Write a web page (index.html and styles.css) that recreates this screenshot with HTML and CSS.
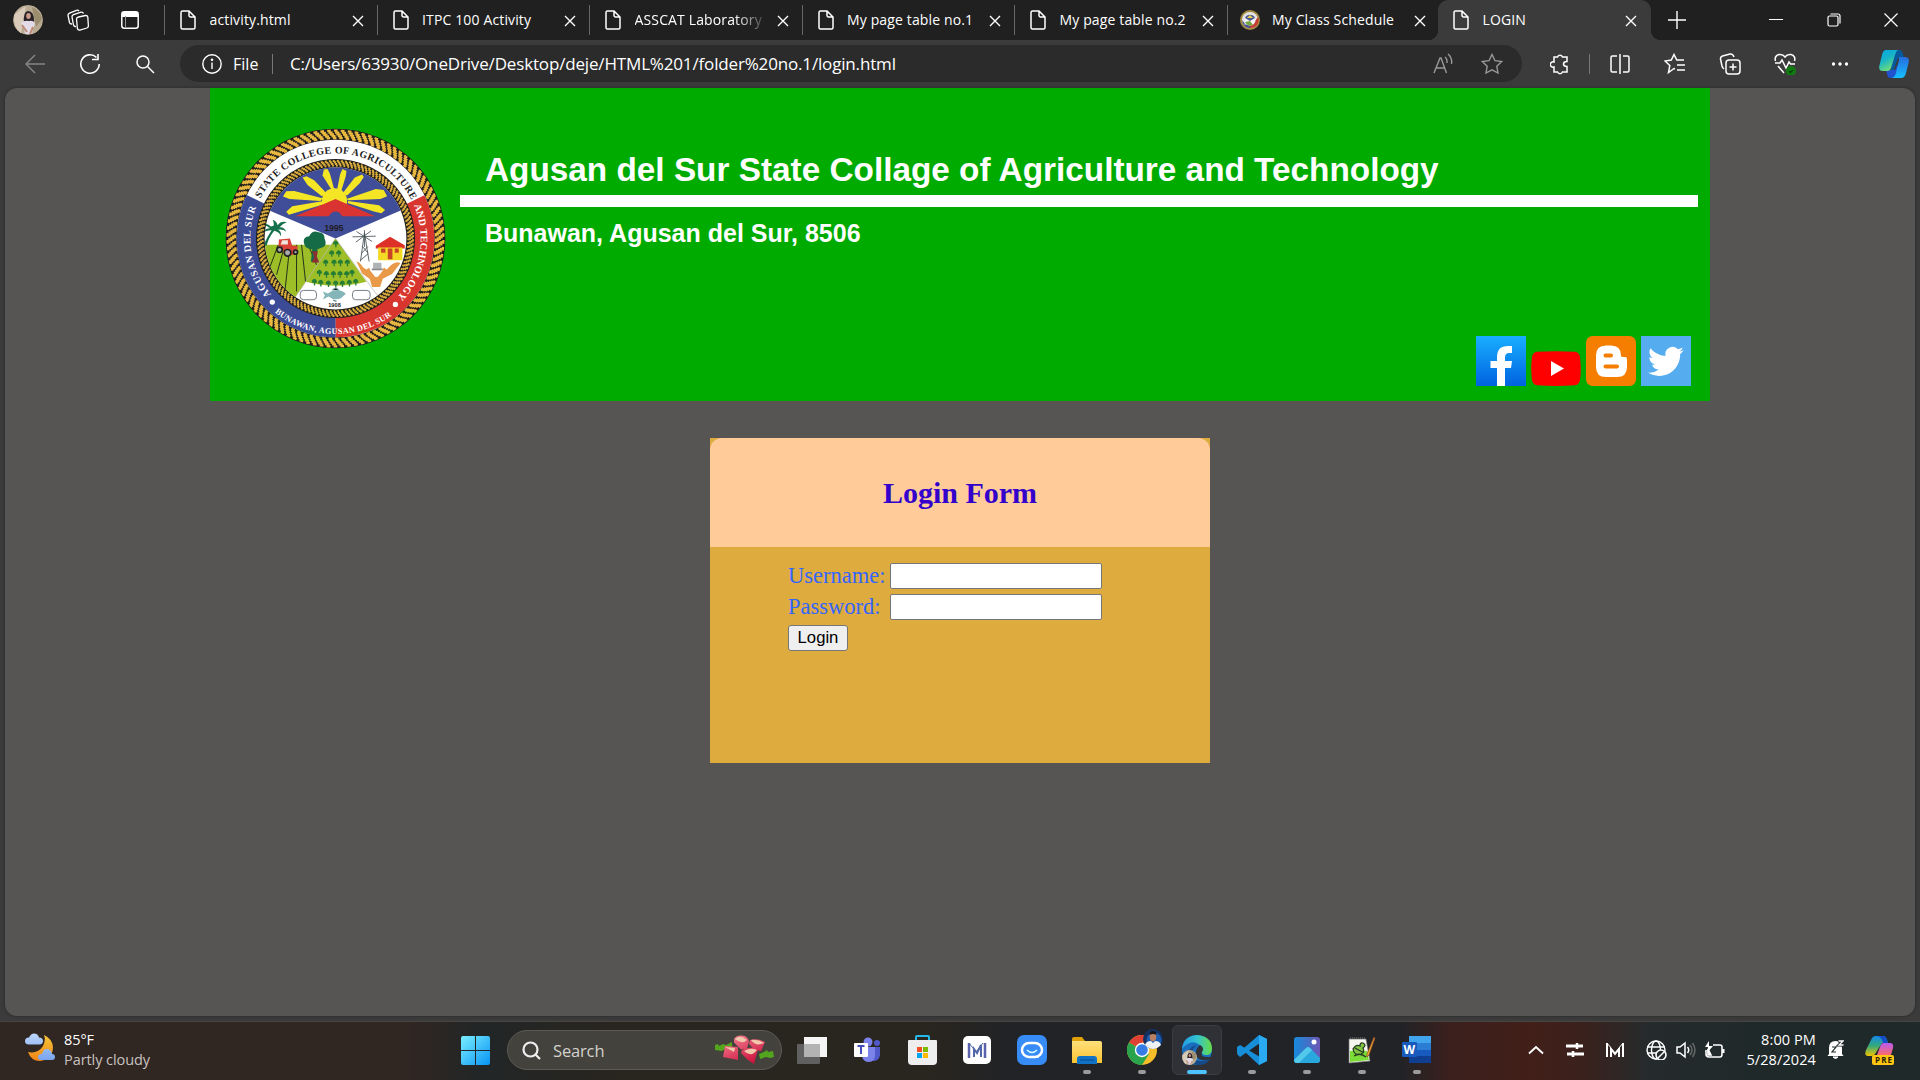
FILE: index.html
```html
<!DOCTYPE html>
<html lang="en">
<head>
<meta charset="utf-8">
<title>LOGIN</title>
<link rel="stylesheet" href="styles.css">
</head>
<body>
<svg class="defs" width="0" height="0">
  <defs>
    <symbol id="doc" viewBox="0 0 16 20"><path d="M2.5 1H9l6 6v10.500a1.500 1.500 0 0 1-1.500 1.500h-11A1.500 1.500 0 0 1 1 17.500v-15A1.500 1.500 0 0 1 2.500 1zM9 1v4.500A1.500 1.500 0 0 0 10.500 7H15" fill="none" stroke="#fff" stroke-width="1.500"/></symbol>
    <symbol id="x" viewBox="0 0 12 12"><path d="M1 1l10 10M11 1L1 11" stroke="#fff" stroke-width="1.400"/></symbol>
    <symbol id="girl" viewBox="0 0 30 30"><circle cx="15" cy="15" r="15" fill="#b9ab93"/><path d="M1 10Q8 4 13 1L8 29Q0 22 1 10z" fill="#d8cbb9"/><path d="M19 2q9 4 10 12l-6 8z" fill="#9c8d6f"/><path d="M11 17q-1-10 4-11 6 0 6 10l-1 3h-8z" fill="#292126"/><ellipse cx="15.500" cy="11" rx="2.300" ry="3" fill="#c99b8b"/><path d="M8 18q3-3 8-2 5-1 6 3l-2 5-1 5h-7l-1-5z" fill="#e3dbe8"/><path d="M9 20l5 7M20 22l-3 7" stroke="#bd8b78" stroke-width="2"/></symbol>
    <linearGradient id="fb" x2="0" y2="1"><stop stop-color="#19afff"/><stop offset="1" stop-color="#0062e0"/></linearGradient>
    <linearGradient id="win" gradientUnits="userSpaceOnUse" x2="29" y2="29"><stop stop-color="#7aefff"/><stop offset="1" stop-color="#0793f5"/></linearGradient>
    <linearGradient id="cpA" x2=".5" y2="1"><stop stop-color="#05a6e9"/><stop offset=".5" stop-color="#18b5c6"/><stop offset="1" stop-color="#76df75"/></linearGradient>
    <linearGradient id="cpB" x2="0" y2="1"><stop stop-color="#276cdf"/><stop offset="1" stop-color="#15bfff"/></linearGradient>
    <linearGradient id="cpC" x2="0" y2="1"><stop stop-color="#1389e9"/><stop offset=".5" stop-color="#36aa78"/><stop offset="1" stop-color="#f2c500"/></linearGradient>
    <linearGradient id="cpD" x2="0" y2="1"><stop stop-color="#b75af0"/><stop offset="1" stop-color="#fa6b6c"/></linearGradient>
    <linearGradient id="moon" x2="0" y2="1"><stop stop-color="#f5c63a"/><stop offset="1" stop-color="#f08314"/></linearGradient>
    <linearGradient id="cloud" x2="0" y2="1"><stop stop-color="#bcd5fb"/><stop offset="1" stop-color="#79a5ee"/></linearGradient>
    <linearGradient id="edgeA"><stop stop-color="#209be6"/><stop offset=".5" stop-color="#32c3d1"/><stop offset="1" stop-color="#68dc45"/></linearGradient>
    <linearGradient id="folder" x2="0" y2="1"><stop stop-color="#ffe07a"/><stop offset="1" stop-color="#fcc332"/></linearGradient>
    <linearGradient id="photo" x2="1"><stop stop-color="#168bdb"/><stop offset="1" stop-color="#6b58b5"/></linearGradient>
    <linearGradient id="red" x2=".6" y2="1"><stop stop-color="#f38b98"/><stop offset="1" stop-color="#cf1340"/></linearGradient>
    <symbol id="seal" viewBox="45 53 664 664">
      <circle cx="377" cy="385" r="330" fill="#211f1c"/>
      <g fill="none" stroke="#e9b940" stroke-width="7">
        <circle cx="377" cy="385" r="302" pathLength="980" stroke-dasharray="5.600 4.400"/>
        <circle cx="377" cy="385" r="307.500" pathLength="980" stroke-dasharray="6.300 3.700" transform="rotate(-.7 377 385)"/>
        <circle cx="377" cy="385" r="313" pathLength="980" stroke-dasharray="6.600 3.400" transform="rotate(-1.500 377 385)"/>
        <circle cx="377" cy="385" r="318.500" pathLength="980" stroke-dasharray="6.300 3.700" transform="rotate(-2.200 377 385)"/>
        <circle cx="377" cy="385" r="324" pathLength="980" stroke-dasharray="5.400 4.600" transform="rotate(-2.800 377 385)"/>
      </g>
      <g fill="none" stroke-width="60">
        <circle cx="377" cy="385" r="267" stroke="#fff"/>
        <circle cx="377" cy="385" r="267" stroke="#d9352f" pathLength="360" stroke-dasharray="116 244" transform="rotate(-26 377 385)"/>
        <circle cx="377" cy="385" r="267" stroke="#3c4b96" pathLength="360" stroke-dasharray="116 244" transform="rotate(90 377 385)"/>
      </g>
      <circle cx="377" cy="385" r="239" fill="#211f1c"/>
      <g fill="none" stroke="#dcae3e" stroke-width="6">
        <circle cx="377" cy="385" r="219" pathLength="1200" stroke-dasharray="5 5"/>
        <circle cx="377" cy="385" r="224" pathLength="1200" stroke-dasharray="6 4" transform="rotate(-.8 377 385)"/>
        <circle cx="377" cy="385" r="229" pathLength="1200" stroke-dasharray="6 4" transform="rotate(-1.600 377 385)"/>
        <circle cx="377" cy="385" r="233" pathLength="1200" stroke-dasharray="5 5" transform="rotate(-2.300 377 385)"/>
      </g>
      <clipPath id="disc"><circle cx="377" cy="385" r="213"/></clipPath>
      <g clip-path="url(#disc)">
        <rect x="160" y="165" width="440" height="440" fill="#fff"/>
        <path d="M150 289L377 385l227-98V150H150z" fill="#404d98"/>
        <path d="M160 404h203L250 570H160z" fill="#9dbe27"/>
        <path d="M205 404l-30 80m50-80l-25 90m40-90l-15 140m35-140v140m15-140l12 110m8-110l25 60" stroke="#23331b" stroke-width="3" fill="none"/>
        <path d="M377 385l-89 130q89 24 182 0z" fill="#9dbe27"/>
        <path d="M377 385L250 570M377 385l140 190" stroke="#999" stroke-width="1.500"/>
        <g fill="#f5e625">
          <path d="M366 240l-28-44 4-18 11-2 7 14 14 50z"/>
          <path d="M381 242l10-50 7-16 12 6-2 16-15 48zM398 250l37-48 22-9 5 7-13 20-37 36zM410 266l88-30 24 3 10 19-20 8-96 4zM414 272l94 13 18 14-11 10-20-4-80-26zM350 249l-37-39-23-12-12 4 15 22 43 34zM338 264l-85-22-24 1-10 16 20 7 93 6zM337 273l-90 15-18 17 8 9 20-6 85-26z"/>
          <circle cx="374" cy="272" r="38"/>
        </g>
        <path d="M256 318l121-52 119 52z" fill="#d93431"/><circle cx="377" cy="324" r="20" fill="#404d98"/>
        <g fill="#123d26"><path d="M183 349q-15-15-30-4 15-1 27 9-15 0-20 13 12-8 25-7-13 20-25 46h10q7-25 23-44 14 3 20 16 2-15-9-19 15-3 25 6-5-15-20-14 10-12 22-15-18-5-28 9-3-12-15-16 5 9 3 18z" fill="#15704c"/><path d="M282 398q-3-18 16-20 9-20 28-12 19 2 18 19 10 22-9 28l-12 4-5 38h-15l4-38q-22 0-25-19z" fill="#146b46"/></g>
        <path d="M307 423h17l-3 16 7 18h-23l8-15z" fill="#8b3032"/>
        <path d="M207 388l33-3 7 22h16l-1 24-20 4-7-12-30 2z" fill="#d94036"/><path d="M217 390h17v13h-22z" fill="#f1e4dc"/><g fill="#aaa" stroke="#222" stroke-width="5"><circle cx="209" cy="419" r="8"/><circle cx="233" cy="428" r="10"/><circle cx="257" cy="426" r="6"/></g>
        <g id="tree" fill="#247c35"><path d="M370 397q8-12 15 0v6h-5v8h-4v-8h-6z"/></g>
        <g><use href="#tree" x="-12" y="29"/><use href="#tree" x="9" y="29"/><use href="#tree" x="-30" y="57"/><use href="#tree" x="-5" y="57"/><use href="#tree" x="14" y="57"/><use href="#tree" x="35" y="57"/><use href="#tree" x="-49" y="88"/><use href="#tree" x="-28" y="92"/><use href="#tree" x="-7" y="92"/><use href="#tree" x="13" y="92"/><use href="#tree" x="33" y="92"/><use href="#tree" x="49" y="88"/><use href="#tree" x="-64" y="115"/><use href="#tree" x="-45" y="118"/><use href="#tree" x="-22" y="120"/><use href="#tree" x="0" y="120"/><use href="#tree" x="20" y="120"/><use href="#tree" x="41" y="118"/><use href="#tree" x="60" y="115"/></g>
        <path d="M464 368l-12 86m12-86l14 86m-20-45l17 20m-21 2l20-22m-23 42l24-20M428 380l70-2m-58-14l47 30m-49 2l46-34M464 360v50" stroke="#444d52" stroke-width="2.500" fill="none"/>
        <path d="M498 407l43-27 44 25v10h-87z" fill="#dc3029"/><path d="M505 412h73v38h-73z" fill="#f4d925"/><path d="M514 415h13v13h-13zm20 0h14v32h-14zm21 0h12v13h-12z" fill="#c94328"/>
        <path d="M440 454q10 2 20 18l10 6 8-5 4 10 15 17 6 0 15-17 4-11 9 6q25-30 41-19l-25 33-28 14-8 25h-24l-7-24-23-17z" fill="#e99a49"/><path d="M490 458h25v18h-25z" fill="#aeb4b6"/><path d="M482 480h38l-16 20h-8z" fill="#fff"/><path d="M486 478h33" stroke="#888" stroke-width="5"/>
        <path d="M339 544l15 6q30-21 54 1l-14 13q-20 9-38-5l-17 9 6-12z" fill="#83b5b9"/><path d="M368 540l10-7 8 7m-16 30l10 4" stroke="#678e93" stroke-width="4"/>
        <g fill="#fff" stroke="#59646d" stroke-width="2.500"><rect x="271" y="541" width="49" height="28" rx="10"/><rect x="428" y="541" width="53" height="28" rx="10"/></g>
        <text x="343" y="363" textLength="58" class="seal-year">1995</text><text x="355" y="591" textLength="38" class="seal-year seal-small">1908</text>
      </g>
      <path id="arcTop" d="M151 264.800A256 256 0 0 1 606 270.800" fill="none"/>
      <path id="arcLeft" d="M183.800 553A256 256 0 0 1 139.600 289" fill="none"/>
      <path id="arcRight" d="M612.600 285A256 256 0 0 1 561 563" fill="none"/>
      <path id="arcBottom" d="M194.400 606.500A287 287 0 0 0 551.700 612.700" fill="none"/>
      <g class="seal-text"><text fill="#222" class="seal-top"><textPath href="#arcTop" textLength="559">STATE COLLEGE OF AGRICULTURE</textPath></text>
      <text><textPath href="#arcLeft" textLength="279">AGUSAN DEL SUR</textPath></text>
      <text><textPath href="#arcRight" textLength="297">AND TECHNOLOGY</textPath></text>
      <text class="seal-bottom"><textPath href="#arcBottom" textLength="378">BUNAWAN, AGUSAN DEL SUR</textPath></text></g>
      <circle cx="187" cy="576" r="8" fill="#fff"/><circle cx="557" cy="583" r="8" fill="#fff"/>
    </symbol>
  </defs>
</svg>

<div class="browser">
  <div class="tabbar">
    <div class="tab-tools">
      <svg class="avatar" width="30" height="30"><use href="#girl"/></svg>
      <svg width="22" height="22" viewBox="0 0 22 22" fill="none" stroke="#fff" stroke-width="1.300"><path d="M11.500 8l7-1.500q2-.2 2.300 1.500l.6 9q0 1.500-1.500 2l-7 2q-2 .3-2.500-1.500L9.500 10q0-1.600 2-2z"/><path d="M9 17.500q-2 .3-2.500-1.500L5 8q-.2-1.600 1.500-2.300L14 3.200q2-.3 2.500 1.500M5 15q-2 .2-2.500-1.500L1 6.500Q.8 5 2.500 4.200L9.500 1.300q1.700-.4 2.500.7"/></svg>
      <svg width="18" height="18" viewBox="0 0 18 18"><rect x=".8" y=".8" width="16.400" height="16.400" rx="2.500" fill="none" stroke="#fff" stroke-width="1.500"/><path d="M1 1h16v5H1z" fill="#fff"/><path d="M4.500 5v12" stroke="#999" stroke-width="1"/></svg>
    </div>
    <div class="tab"><svg class="ico"><use href="#doc"/></svg><span>activity.html</span><svg class="close"><use href="#x"/></svg></div>
    <div class="tab"><svg class="ico"><use href="#doc"/></svg><span>ITPC 100 Activity</span><svg class="close"><use href="#x"/></svg></div>
    <div class="tab"><svg class="ico"><use href="#doc"/></svg><span class="fade">ASSCAT Laboratory</span><svg class="close"><use href="#x"/></svg></div>
    <div class="tab"><svg class="ico"><use href="#doc"/></svg><span>My page table no.1</span><svg class="close"><use href="#x"/></svg></div>
    <div class="tab"><svg class="ico"><use href="#doc"/></svg><span>My page table no.2</span><svg class="close"><use href="#x"/></svg></div>
    <div class="tab seal-tab"><svg class="ico" viewBox="0 0 20 20"><circle cx="10" cy="10" r="10" fill="#a28b43"/><circle cx="10" cy="10" r="8" fill="#e4e4e4"/><path d="M3 14a8 8 0 0 0 7 4v-3zM2 10l3 4-1 1a8 8 0 0 1-2-5z" fill="#46508f"/><path d="M18 7a8 8 0 0 1-8 11v-3l5-4z" fill="#c73b35"/><circle cx="10" cy="10" r="5.500" fill="#f4f4f4"/><path d="M5 8a5.500 5.500 0 0 1 10 0l-5 3z" fill="#4d5995"/><path d="M7 8l3-3 3 3z" fill="#e7d143"/><path d="M5 12l5-1 3 4q-5 2-8-3z" fill="#72a53a"/></svg><span>My Class Schedule</span><svg class="close"><use href="#x"/></svg></div>
    <div class="tab active"><svg class="ico"><use href="#doc"/></svg><span>LOGIN</span><svg class="close"><use href="#x"/></svg></div>
    <svg class="plus" width="18" height="18"><path d="M9 0v18M0 9h18" stroke="#fff" stroke-width="1.400"/></svg>
    <div class="window-buttons">
      <svg width="14" height="14"><path d="M0 6.500h14" stroke="#fff" stroke-width="1"/></svg>
      <svg width="14" height="14" fill="none" stroke="#fff" stroke-width="1.200"><rect x="1" y="3" width="10" height="10" rx="1.500"/><path d="M3.500 1h7.500q2 0 2 2v7.500"/></svg>
      <svg width="14" height="14"><path d="M.5.500l13 13m0-13l-13 13" stroke="#fff" stroke-width="1.200"/></svg>
    </div>
  </div>

  <div class="toolbar">
    <div class="nav">
      <svg width="20" height="20" fill="none" stroke="#858585" stroke-width="1.500"><path d="M10 1L1 10l9 9M1 10h19"/></svg>
      <svg width="22" height="22" fill="none" stroke="#fff" stroke-width="1.600"><path d="M17.500 4.500A9.200 9.200 0 1 0 20.200 11M19 1v5.500h-6"/></svg>
      <svg width="20" height="20" fill="none" stroke="#fff" stroke-width="1.500"><circle cx="8" cy="8" r="6"/><path d="M12.500 12.500L19 19"/></svg>
    </div>
    <div class="address">
      <svg width="20" height="20" fill="none" stroke="#fff" stroke-width="1.400"><circle cx="10" cy="10" r="9.200"/><path d="M10 8.500V15"/><circle cx="10" cy="5.700" r=".6" fill="#fff"/></svg>
      <span class="scheme">File</span><i></i><span class="url">C:/Users/63930/OneDrive/Desktop/deje/HTML%201/folder%20no.1/login.html</span>
      <svg class="aloud" width="20" height="22" fill="none" stroke="#999" stroke-width="1.400"><path d="M1 20L7 5h1l5.500 15M3 15h9M12 4q2.500 2 2 6M15 1q4.500 4 3.500 10"/></svg>
      <svg width="22" height="22" viewBox="0 0 22 22" fill="none" stroke="#999" stroke-width="1.400"><path d="M11 1.500l3 6.200 6.700.9-4.900 4.700 1.200 6.700-6-3.200L5 20l1.200-6.700-4.900-4.700L8 7.700z"/></svg>
    </div>
    <div class="puzzle"><svg width="20" height="22" fill="none" stroke="#fff" stroke-width="1.500"><path d="M4 4h3.500a2.700 2.700 0 0 1 5 0H17v4.500q-3.500 0-3.500 2.500t3.500 2.500V19h-4.500a2.700 2.700 0 0 1-5 0H4v-5a2.700 2.700 0 1 1 0-5z"/></svg></div>
    <div class="actions">
      <svg width="22" height="22" fill="none" stroke="#fff" stroke-width="1.500"><path d="M8 3H3.500Q2 3 2 4.500v13Q2 19 3.500 19H8m6-16h4.500Q20 3 20 4.500v13q0 1.500-1.500 1.500H14M11 1v20"/></svg>
      <svg width="22" height="22" fill="none" stroke="#fff" stroke-width="1.500"><path d="M11 16l-1-.5-5.500 4 1.300-7L1 8l6.300-1L10 1.500 12.800 7H20M13 12h8M13 17h8"/></svg>
      <svg width="22" height="22" fill="none" stroke="#fff" stroke-width="1.500"><rect x="7" y="7" width="14" height="14" rx="3"/><path d="M14 10.500v7M10.500 14h7M5 16q-1.500-1-2-3L1.500 6q-.3-2 2-3L11 1q3-.3 4 3"/></svg>
      <svg width="22" height="22" fill="none" stroke="#fff" stroke-width="1.500"><path d="M1.500 8Q0 3 5 1.500 9 1 11 4q2-3 6-2.500Q22 3 20.500 8M1 10h5l2-3 4 8 3-6 1.500 2H21M4 13l6 7"/><circle cx="17" cy="18" r="5" fill="#107c10" stroke="none"/><path d="M15 18l1.500 1.500L19 17" stroke="#064806"/></svg>
      <svg width="18" height="6" fill="#fff"><circle cx="2.500" cy="3" r="1.700"/><circle cx="9" cy="3" r="1.700"/><circle cx="15.500" cy="3" r="1.700"/></svg>
      <svg width="30" height="28" viewBox="0 0 30 28"><path d="M16 0h5q2 0 3 4l1 4h-6l-5 14-4-6z" fill="#07599c"/><path d="M7 20h9l3-6 3 0-4 11q-1 3-4 3h-3q-2 0-3-4z" fill="#2253cf"/><path d="M7 0h12q-2 1-3 5l-4 13q-1 3-4 3H4q-5 0-3.500-6L3 5Q4 0 7 0z" fill="url(#cpA)"/><path d="M20 7h6q5 0 3.500 6L27 23q-1 5-5 5h-9q3-1 4-5l3-13z" fill="url(#cpB)"/></svg>
    </div>
  </div>

  <div class="viewport">
    <main class="site">
      <header class="banner">
        <svg class="logo"><use href="#seal"/></svg>
        <div class="heading">
          <h1>Agusan del Sur State Collage of Agriculture and Technology</h1>
          <div class="rule"></div>
          <h2>Bunawan, Agusan del Sur, 8506</h2>
          <div class="social">
            <svg width="50" height="50"><path fill="url(#fb)" d="M0 0h50v50H0z"/><path d="M21 50V32h-6.500v-7H21v-4q0-11 11-11h4v7h-3q-4 0-4 4.500V25h7l-1 7h-6v18z" fill="#fff"/></svg>
            <svg width="50" height="35"><path d="M6 .8Q25-.5 44 .8q4 .5 5 5 1.500 12 0 23.500-1 4.500-5 5-19 1.200-38 0-4-.5-5-5-1.500-12 0-23.500 1-4.500 5-5z" fill="red"/><path d="M20 10l13 7.500L20 25z" fill="#fff"/></svg>
            <svg width="50" height="50"><rect width="50" height="50" rx="6.500" fill="#f57d00"/><path fill-rule="evenodd" d="M20 9.500h5q10 0 10 10 0 1.500 3 1.500h1q2 0 2 2v8q0 10-10 10H20q-10 0-10-10V19.500q0-10 10-10zM19.500 17.500a2 2 0 0 0 0 4H25a2 2 0 0 0 0-4zm0 11a2 2 0 0 0 0 4H31a2 2 0 0 0 0-4z" fill="#fff"/></svg>
            <svg width="50" height="50"><path d="M0 0h50v50H0z" fill="#55acee"/><path transform="translate(7 7.500) scale(1.490)" d="M23.950 4.570a10 10 0 0 1-2.820.77 4.960 4.960 0 0 0 2.160-2.720c-.95.550-2 .950-3.120 1.180a4.920 4.920 0 0 0-8.390 4.480C7.690 8.100 4.070 6.130 1.640 3.160a4.820 4.820 0 0 0-.66 2.480c0 1.710.87 3.210 2.190 4.100a4.900 4.900 0 0 1-2.230-.62v.06a4.920 4.920 0 0 0 3.950 4.830 5 5 0 0 1-2.210.08 4.940 4.940 0 0 0 4.600 3.420A9.870 9.870 0 0 1 0 19.540a13.990 13.990 0 0 0 7.560 2.210c9.050 0 14-7.500 14-13.980 0-.21 0-.42-.02-.63a9.940 9.940 0 0 0 2.410-2.570z" fill="#fff"/></svg>
          </div>
        </div>
      </header>
      <section class="card">
        <h3>Login Form</h3>
        <form onsubmit="return false">
          <label for="user">Username:</label><input id="user" type="text">
          <label for="pass">Password:</label><input id="pass" type="password">
          <button>Login</button>
        </form>
      </section>
    </main>
  </div>
</div>

<footer class="taskbar">
  <div class="weather">
    <svg width="30" height="29" viewBox="0 0 30 29"><path d="M19 2q9 4 9 13-1 12-13 13-9 0-12-9 10 2 15-6 3-6 1-11z" fill="url(#moon)"/><path d="M4 11.500q-4 0-4-3.500t4-3.500Q6 .5 9 .5q4 0 5 4 4 0 4 3.500t-4 3.500zM16 27q-3 0-3-3t4-3q1-5 5-5t5 5q3 0 3 3t-3 3z" fill="url(#cloud)"/></svg>
    <div><b>85°F</b><span>Partly cloudy</span></div>
  </div>
  <svg class="start" width="29" height="29"><path d="M0 2q0-2 2-2h12v14H0zM15 0h12q2 0 2 2v12H15zM0 15h14v14H2q-2 0-2-2zM15 15h14v12q0 2-2 2H15z" fill="url(#win)"/></svg>
  <div class="search">
    <svg width="19" height="19" fill="none" stroke="#eee" stroke-width="2.200"><circle cx="8.500" cy="8.500" r="7"/><path d="M13.500 13.500L18 18"/></svg><span>Search</span>
    <svg width="60" height="30" viewBox="0 0 60 30"><path d="M0 10l3-1 1 2 4-2 3 1 4-2 2-1v7l-5 1-2-1-3 2-7-1zM44 19l5-2 3-2 1 2 5-1 1 6-4 1-4-1-6 2z" fill="#53a51d"/><path d="M19 4q2-4 8-3.500 6 .5 7 6l-2 7-6 1-7-7zM35 5q8-2 15 2l-4 9-6-1-6-6zM10 11l13 1v13L8 22zM27 15q8-4 16-1l-3 11-1 4-6-4-7-7z" fill="url(#red)"/><path d="M20 4q5-5 12 1-5 5-12-1zM36 5q7-1 13 3-8 4-13-3zM29 16q7-4 13-1-6 8-13 1zM10 12l10 1-1 4z" fill="#f0c8ac"/></svg>
  </div>
  <div class="apps">
    <div class="app"><svg width="30" height="28"><path d="M7 1h23v20H7z" fill="#f5f5f5"/><rect y="8" width="23" height="20" rx="1" fill="#606060"/><path d="M7 8h16v13H7z" fill="#b3b3b3"/></svg></div>
    <div class="app"><svg width="28" height="26"><circle cx="15" cy="5" r="4.500" fill="#7b83eb"/><circle cx="24" cy="6" r="3" fill="#5059c9"/><path d="M18 10h9v8q-1 6-7 6z" fill="#5059c9"/><path d="M8 10h14v8q0 7-6 7t-7-6z" fill="#7b83eb"/><rect x="1" y="6" width="14" height="14" rx="1" fill="#fff"/><path d="M4.500 9h7M8 9v8" stroke="#444dba" stroke-width="2"/></svg></div>
    <div class="app"><svg width="29" height="30"><path d="M8 6V2q0-1 1-1h11q1 0 1 1v4" fill="none" stroke="#25b9eb" stroke-width="2"/><path d="M1 5h27q1 0 1 1v20q0 4-4 4H4q-4 0-4-4V6q0-1 1-1z" fill="#eee"/><path d="M9 12h5v5H9z" fill="#f25022"/><path d="M15 12h5v5h-5z" fill="#7fba00"/><path d="M9 18h5v5H9z" fill="#00a4ef"/><path d="M15 18h5v5h-5z" fill="#ffb900"/></svg></div>
    <div class="app"><svg width="30" height="30"><rect x="1" y="1" width="28" height="28" rx="5" fill="#fff"/><path d="M7 8v15M23 8v15" stroke="#5b62ad" stroke-width="2.500"/><path d="M12 22v-8l3 4 4-8v12" fill="none" stroke="#5267aa" stroke-width="2"/><path d="M7 8l7 9 7-9" fill="none" stroke="#5267aa"/></svg></div>
    <div class="app"><svg width="30" height="30"><rect width="30" height="30" rx="7" fill="#378cf8"/><rect x="5" y="8" width="20" height="14" rx="7" fill="none" stroke="#fff" stroke-width="2.500"/><path d="M10 15q5 5 10 0" fill="none" stroke="#dff" stroke-width="1.300"/><path d="M14 22h7l2-3" fill="none" stroke="#fff" stroke-width="1.500"/></svg></div>
    <div class="app open"><svg width="30" height="28"><path d="M0 3q0-2 2-2h8l3 4v5H0z" fill="#e2a109"/><path d="M0 5h28q2 0 2 2v20H0z" fill="url(#folder)"/><path d="M5 28v-5q0-3 3-3h14q3 0 3 3v5z" fill="#1173c6"/><path d="M8 24h14" stroke="#084b92"/></svg></div>
    <div class="app open chrome"><svg width="36" height="36" viewBox="0 0 36 36"><circle cx="15" cy="21" r="15" fill="#f4bd29"/><path d="M15 21L2 13.500A15 15 0 0 1 28 13.500H15z" fill="#de4034"/><path d="M15 21L2 13.500A15 15 0 0 0 15 36l7-11z" fill="#2aa34d"/><circle cx="15" cy="21" r="7.200" fill="#fff"/><circle cx="15" cy="21" r="5.800" fill="#367ce5"/><circle cx="26" cy="10" r="10" fill="#14315f"/><circle cx="27" cy="11" r="7.500" fill="#1c5cb0"/><path d="M18 16q1-4 6-4l2 2 2-2q5 0 6 4-8 8-16 0z" fill="#edf1f4"/><ellipse cx="26" cy="7.500" rx="3.300" ry="4.700" fill="#b98065"/><path d="M22.500 6q0-4 3.500-4t3.500 4q-3.500-2-7 0z" fill="#16151a"/></svg></div>
    <div class="app open current"><svg width="30" height="30" viewBox="0 0 30 30"><circle cx="15" cy="15" r="15" fill="#196ebd"/><path d="M0 14Q1 1 15 0q14 1 15 13 0 8-7 7-4-1-3-4 1-4-2-6-9-7-18 4z" fill="url(#edgeA)"/><path d="M10 19q1 8 12 7l6-2q-4 7-13 6Q5 27 6 18q2-7 9-8-5 3-5 9z" fill="#164a87"/><path d="M18 10q5 3 2 7-2 5 5 5h4l-1 2q-12 4-14-5-1-5 4-9z" fill="#303237"/><svg y="15" width="15" height="15" viewBox="0 0 30 30"><use href="#girl" width="30" height="30"/></svg></svg></div>
    <div class="app open"><svg width="30" height="30"><path d="M22 0l8 4v22l-8 4L7 16l-4 4-3-2V12l3-2 20 12V8L3 22l-3-3L22 0z" fill="#168ed8"/><path d="M22 0l8 4v22l-8 4z" fill="#2aaaf0"/></svg></div>
    <div class="app open"><svg width="26" height="26"><rect width="26" height="26" rx="3" fill="url(#photo)"/><path d="M0 23l12-12q2-2 4 0l10 10v2q0 3-3 3H3q-3 0-3-3z" fill="#28a8dc"/><path d="M0 23l12-12q2-2 4 0l2 2L5 26H3q-3 0-3-3z" fill="#52c9eb"/><circle cx="20" cy="5" r="2.500" fill="#fff"/></svg></div>
    <div class="app open"><svg width="28" height="28"><path d="M1 3h17l4 22-21 2z" fill="#f6f6ee" stroke="#777" stroke-width=".7"/><path d="M2 2h15" stroke="#555" stroke-width="2" stroke-dasharray="1 1"/><path d="M2 15h17l2 9-19 2z" fill="#7ade37"/><path d="M5 13q3-5 7-3 0-4 3-3 4 2 0 5 2 4-2 6-7 2-8-5zM6 20q6-4 12 1M7 12l9 5" fill="#82c546" stroke="#283a20" stroke-width="1.300"/><path d="M27 2l-6 17-2 2 0-3L26 1z" fill="#eaad32" stroke="#8e4220" stroke-width=".7"/></svg></div>
    <div class="app open"><svg width="30" height="28"><path d="M7 0h22v7H7z" fill="#41a5ee"/><path d="M7 7h22v7H7z" fill="#2b7cd3"/><path d="M7 14h22v6H7z" fill="#185abd"/><path d="M7 20h22v7H7z" fill="#103f91"/><rect y="6" width="15" height="15" rx="1" fill="#185abd"/><text x="1.500" y="18" class="word">W</text></svg></div>
  </div>
  <div class="tray">
    <svg width="16" height="10"><path d="M1 8.500L8 2l7 6.500" fill="none" stroke="#fff" stroke-width="1.900"/></svg>
    <svg width="18" height="16" stroke="#fff" stroke-width="3"><path d="M0 4h17M1 12h17"/><path d="M11 1v6M7 9v6" stroke-width="2.500"/></svg>
    <svg width="18" height="16" fill="none" stroke="#fff" stroke-width="2"><path d="M1 1v14M17 1v14M5 15V7l4 5 4-5v8"/><path d="M1 1l8 10 8-10" stroke-width="1"/></svg>
  </div>
  <div class="system">
    <svg width="21" height="20" fill="none" stroke="#fff" stroke-width="1.400"><circle cx="10" cy="10" r="9"/><ellipse cx="10" cy="10" rx="4.500" ry="9"/><path d="M1 7h18M1 13h18"/><circle cx="15" cy="15" r="5" fill="#252b2d" stroke-width="1.600"/><path d="M11.500 18.500l7-7"/></svg>
    <svg width="20" height="18" fill="none" stroke="#fff" stroke-width="1.500"><path d="M1 6h3l5-4v14l-5-4H1zM11.500 6q2.500 3 0 6"/><path d="M14 4q4 5 0 10M16.500 2q5 7 0 14" stroke="#666"/></svg>
    <svg width="20" height="18" fill="none" stroke="#fff" stroke-width="1.600"><path d="M8 4h7q2 0 2 2v7q0 3-2 3H4q-3 0-3-3V9"/><path d="M17 10h2.500" stroke-width="4"/><path d="M4 0L0 6h3l-1 6 6-7H4z" fill="#fff" stroke="none"/><path d="M3 8v6h3z" fill="#fff"/></svg>
  </div>
  <div class="clock"><span>8:00 PM</span><span>5/28/2024</span></div>
  <svg class="bell" width="17" height="20"><path d="M2 14V8q0-7 6.500-7T15 8v6l1.500 2H.5z" fill="#fff"/><path d="M6 17h5q-2.500 3-5 0z" fill="#fff" stroke="#fff"/><path d="M11 1h5l-4 4h4" stroke="#20292a" fill="none" stroke-width="3"/><path d="M11.500 1h4.500l-4 4h4.500" stroke="#fff" fill="none" stroke-width="1.300"/><path d="M5 7h4l-4 5h4" stroke="#20292a" fill="none" stroke-width="1.200"/></svg>
  <svg class="copilot" width="30" height="29" viewBox="0 0 30 29"><path d="M7 2q1-2 4-2h7q3 0 4 4l1 3h-6l-7 11q-1 2-4 2H3q-4 0-2-6z" fill="url(#cpC)"/><path d="M12 0h6q3 0 4 4l1 3h-5q-1-6-6-7z" fill="#154fc8"/><path d="M19 7h6q4 0 3 5l-2 7H12l3-8q1-4 4-4z" fill="url(#cpD)"/><rect x="7" y="19" width="22" height="10" rx="2" fill="#ffc714"/><text x="10" y="27" textLength="17" class="pre">PRE</text></svg>
</footer>
</body>
</html>
```
FILE: styles.css
```css
* { box-sizing: border-box; }
body { margin: 0; width: 1920px; height: 1080px; overflow: hidden; background: #3b3b3b; color: #fff; font-family: "Open Sans", "Noto Sans", sans-serif; }
svg { flex: none; display: block; }
.defs { position: absolute; }

.browser { height: 1021px; background: #3b3b3b; display: flex; flex-direction: column; }

/* Tab strip */
.tabbar { height: 40px; background: #202020; display: flex; align-items: center; flex: none; }
.tab-tools { width: 164px; height: 40px; display: flex; align-items: center; padding-left: 13px; }
.tab-tools svg:nth-child(2) { margin-left: 24px; }
.tab-tools svg:nth-child(3) { margin-left: 32px; }
.avatar { clip-path: circle(50%); }
.tab { width: 212.5px; height: 30px; border-left: 1px solid #666; display: flex; align-items: center; padding-left: 14px; font-size: 14px; flex: none; }
.tab .ico { width: 18px; height: 20px; }
.tab span { width: 138px; margin-left: 12.5px; letter-spacing: .14px; white-space: nowrap; overflow: hidden; flex: none; line-height: 26px; }
.tab .close { width: 12px; height: 12px; margin-left: 4px; position: relative; top: 1px; }
.tab.seal-tab { width: 211.5px; }
.tab.seal-tab .ico { width: 20px; margin-left: -2px; }
.fade { mask-image: linear-gradient(90deg, #000 72%, transparent 97%); }
.tab.active { height: 40px; border: 0; padding-left: 14px; background: #3b3b3b; border-radius: 10px 10px 0 0; position: relative; }
.tab.active::before, .tab.active::after { content: ""; position: absolute; bottom: 0; width: 10px; height: 10px; }
.tab.active::before { left: -10px; background: radial-gradient(circle at 0 0, #202020 10px, #3b3b3b 10.500px); }
.tab.active::after { right: -10px; background: radial-gradient(circle at 100% 0, #202020 10px, #3b3b3b 10.500px); }
.plus { margin-left: 17px; }
.window-buttons { margin-left: auto; display: flex; gap: 43.5px; padding-right: 22px; }

/* Toolbar */
.toolbar { height: 48px; padding-top: 5px; display: flex; flex: none; align-items: flex-start; }
.nav { width: 180px; height: 37px; padding-left: 7px; display: grid; grid-template-columns: repeat(3, 55px); place-items: center; }
.address { width: 1343px; height: 37px; border-radius: 19px; background: #2b2b2b; display: flex; align-items: center; padding: 0 19px 0 22px; }
.scheme { margin-left: 11px; width: 28px; font-size: 16px; letter-spacing: .05px; }
.address i { width: 1px; height: 20px; background: #777; margin: 0 17px 0 11px; }
.url { font-size: 17px; letter-spacing: -.16px; white-space: nowrap; line-height: 24px; }
.aloud { margin-left: auto; margin-right: 28px; }
.puzzle { width: 68px; height: 37px; display: flex; align-items: center; padding-left: 28px; position: relative; }
.puzzle::after { content: ""; position: absolute; right: 0; top: 9px; width: 1px; height: 20px; background: #777; }
.actions { height: 37px; margin-left: 2px; display: grid; grid-template-columns: repeat(5, 55px) 53px; place-items: center; }

/* Web page */
.viewport { width: 1910px; height: 928px; margin-left: 5px; border-radius: 12px; background: #575553; overflow: hidden; box-shadow: 0 0 3px #252525; flex: none; }
.site { width: 1500px; margin: 0 auto; }
.banner { height: 313px; background: #00ab00; display: flex; font-family: "Liberation Sans", Arial, sans-serif; }
.logo { width: 221px; height: 221px; margin: 40px 14px 0 15px; }
.seal-text { font: bold 30px "Liberation Serif", serif; fill: #fff; }
.seal-top { fill: #222; }
.seal-bottom { font-size: 25px; }
.seal-year { font: bold 27px "Liberation Sans", sans-serif; fill: #201d25; }
.seal-small { font-size: 17px; }
.heading { width: 1238px; display: flex; flex-direction: column; }
.heading h1 { margin: 63px 0 6px 25px; font-size: 33.33px; line-height: 38px; white-space: nowrap; }
.rule { height: 12px; background: #fff; }
.heading h2 { margin: 12px 0 0 25px; font-size: 25px; line-height: 28px; }
.social { display: flex; align-items: flex-end; justify-content: flex-end; gap: 5px; margin: auto 7px 15px 0; }
.card { width: 500px; height: 325px; margin: 37px auto 0; background: #deab3e; font-family: "Liberation Serif", "Times New Roman", serif; }
.card h3 { height: 109px; margin: 0; border-radius: 12px 12px 0 0; background: #ffcc99; color: #3300cc; font-size: 30px; line-height: 110px; text-align: center; }
.card form { padding: 16px 0 0 78px; display: grid; grid-template-columns: 97px 212px; grid-auto-rows: 26px; gap: 5px; color: #3366ff; font-size: 22.5px; line-height: 26px; }
.card input { width: 212px; height: 26px; border: 1px solid #767676; border-radius: 2px; background: #fff; padding: 0; }
.card button { width: 60px; height: 26px; padding: 0; border: 1px solid #767676; border-radius: 3px; background: #efefef; color: #000; font: 16.67px "Liberation Sans", Arial, sans-serif; }

/* Taskbar */
.taskbar { height: 59px; border-top: 1px solid #484441; display: flex; align-items: flex-start; background: linear-gradient(90deg, #302622 0, #302622 410px, #222627 480px, #29251f 620px, #29251f 930px, #212327 1010px, #212327 1400px, #3b201d 1450px, #421f19 1530px, #3b211c 1580px, #252b2d 1650px, #20292a 1750px, #20292a); font-size: 15px; }
.weather { width: 461px; padding: 11px 0 0 25px; display: flex; }
.weather div { margin: -3px 0 0 9px; display: flex; flex-direction: column; line-height: 20px; font-size: 14.5px; letter-spacing: -.07px; }
.weather b { font-weight: 400; }
.weather span { color: #c9c3c0; }
.start { margin-top: 14px; }
.search { width: 275px; height: 40px; margin: 8px 0 0 17px; border-radius: 20px; border: 1px solid #5d5a55; background: #43423d; display: flex; align-items: center; padding-left: 14px; }
.search span { width: 162px; margin-left: 12px; font-size: 16.5px; color: #d4d2ce; letter-spacing: -.15px; }
.apps { margin: 3px 0 0 5px; display: grid; grid-template-columns: repeat(12, 50px); column-gap: 5px; }
.app { height: 50px; display: flex; align-items: center; justify-content: center; position: relative; }
.app.open::after { content: ""; position: absolute; left: 21px; bottom: 1px; width: 8px; height: 4px; border-radius: 2px; background: #9b9b9d; }
.app.current { background: #303136; border: 1px solid #3b3c40; border-radius: 6px; }
.app.current::after { left: 14px; bottom: 0; width: 20px; background: #4cc2ff; }
.app.chrome { padding: 0 0 6px 6px; }
.word { font: bold 12px "Open Sans", sans-serif; fill: #fff; }
.tray { margin: 18px 0 0 86px; height: 20px; display: flex; align-items: center; gap: 22px; }
.system { margin: 18px 0 0 22px; height: 20px; display: flex; align-items: center; gap: 9px; }
.clock { width: 91px; margin: 8px 0 0; display: flex; flex-direction: column; text-align: right; line-height: 20px; font-size: 14.5px; letter-spacing: .1px; }
.bell { margin: 18px 0 0 11px; }
.copilot { margin: 14px 0 0 21px; }
.pre { font: bold 8px "Open Sans", sans-serif; fill: #282000; }
```
